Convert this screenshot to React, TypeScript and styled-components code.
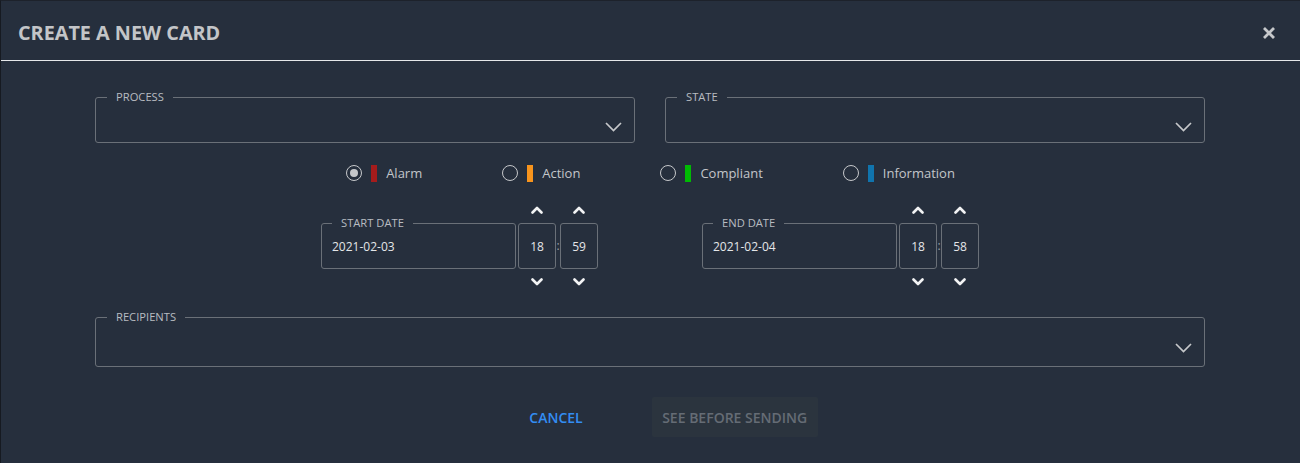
import React from "react";
import styled, { createGlobalStyle } from "styled-components";

const Global = createGlobalStyle`
  html, body { margin: 0; padding: 0; background: #262f3d; }
  body { font-family: "Open Sans", "Noto Sans", sans-serif; }
  * { box-sizing: border-box; }
`;

const Dialog = styled.div`
  width: 1300px;
  height: 463px;
  background: #262f3d;
  border-left: 1px solid #161a21;
  border-top: 1px solid #1d222b;
  display: flex;
  flex-direction: column;
`;

const Header = styled.div`
  height: 60px;
  border-bottom: 1px solid #e6e8ea;
  display: flex;
  align-items: center;
  justify-content: space-between;
  padding: 4px 24px 0 17px;
`;

const Title = styled.h1`
  margin: 0;
  font-size: 19.8px;
  font-weight: 700;
  color: #c3c5c8;
`;

const Close = styled.button`
  background: none;
  border: none;
  padding: 0;
  width: 14px;
  height: 14px;
  display: flex;
  align-items: center;
  justify-content: center;
  cursor: pointer;
`;

const Body = styled.div`
  padding: 30px 95px 0 94px;
  display: flex;
  flex-direction: column;
`;

const Row = styled.div<{ $mt?: number }>`
  display: flex;
  gap: 30px;
  margin-top: ${(p) => p.$mt ?? 0}px;
`;

const Field = styled.fieldset<{ $h: number; $shift: number }>`
  flex: 1;
  margin: 0;
  padding: 0 11px;
  min-width: 0;
  height: ${(p) => p.$h}px;
  border: 1px solid #6a7078;
  border-radius: 3px;
  position: relative;

  & > svg {
    position: absolute;
    right: 12px;
    top: calc(50% + ${(p) => p.$shift}px);
    margin-top: -5px;
  }
`;

const Legend = styled.legend`
  margin-left: 0;
  padding: 0 9px;
  font-size: 11.2px;
  color: #b8bcc1;
  line-height: 12px;
`;

const Radios = styled.div`
  display: flex;
  justify-content: center;
  gap: 80px;
  margin-top: 21px;
  margin-left: 1px;
  height: 18px;
`;

const RadioItem = styled.label`
  display: flex;
  align-items: center;
  font-size: 13px;
  color: #c3c6ca;
`;

const RadioCircle = styled.span<{ $on?: boolean }>`
  width: 16px;
  height: 16px;
  border-radius: 50%;
  border: 1.5px solid #c6c8cb;
  display: flex;
  align-items: center;
  justify-content: center;
  &::after {
    content: "";
    width: 8px;
    height: 8px;
    border-radius: 50%;
    background: ${(p) => (p.$on ? "#c6c8cb" : "transparent")};
  }
`;

const ColorBar = styled.span<{ $c: string }>`
  width: 6px;
  height: 17px;
  background: ${(p) => p.$c};
  margin: 0 9px 0 9px;
`;

const Dates = styled.div`
  display: flex;
  justify-content: center;
  gap: 104px;
  margin-top: 15px;
`;

const DateGroup = styled.div`
  display: flex;
  align-items: flex-start;
`;

const DateField = styled.fieldset`
  margin: 20px 2px 0 0;
  width: 195px;
  height: 52px;
  padding: 0 10px 4px;
  border: 1px solid #6a7078;
  border-radius: 3px;
  display: flex;
  align-items: center;
  font-size: 12px;
  color: #e4e6e8;
`;

const TimeCol = styled.div`
  display: flex;
  flex-direction: column;
  align-items: center;
`;

const Arrow = styled.button`
  background: none;
  border: none;
  padding: 0;
  height: 26px;
  width: 38px;
  display: flex;
  align-items: center;
  justify-content: center;
`;

const TimeBox = styled.div`
  width: 38px;
  height: 46px;
  border: 1px solid #6a7078;
  border-radius: 3px;
  display: flex;
  align-items: center;
  justify-content: center;
  font-size: 12px;
  color: #e4e6e8;
`;

const Colon = styled.span`
  width: 4px;
  text-align: center;
  font-size: 12px;
  color: #9aa0a6;
  margin-top: 40px;
`;

const Actions = styled.div`
  display: flex;
  justify-content: center;
  align-items: center;
  gap: 53px;
  margin-top: 30px;
  padding-left: 31px;
`;

const TextButton = styled.button`
  background: none;
  border: none;
  font-family: inherit;
  font-size: 14px;
  font-weight: 600;
  color: #338df2;
  padding: 0 16px;
  height: 40px;
`;

const DisabledButton = styled.button`
  background: #2b343e;
  border: none;
  border-radius: 2px;
  font-family: inherit;
  font-size: 14px;
  font-weight: 600;
  color: #656c75;
  width: 166px;
  height: 40px;
  padding: 0;
`;

const Chevron = ({ up }: { up?: boolean }) => (
  <svg width="12" height="8" viewBox="0 0 12 8">
    <polyline
      points={up ? "1.5,6.5 6,2 10.5,6.5" : "1.5,1.5 6,6 10.5,1.5"}
      fill="none"
      stroke="#f2f3f4"
      strokeWidth="2.6"
      strokeLinecap="round"
      strokeLinejoin="round"
    />
  </svg>
);

const SelChevron = () => (
  <svg width="17" height="10" viewBox="0 0 17 10">
    <polyline points="1,1 8.5,8.5 16,1" fill="none" stroke="#c6c8cb" strokeWidth="1.7" />
  </svg>
);

const Time = ({ v }: { v: string }) => (
  <TimeCol>
    <Arrow>
      <Chevron up />
    </Arrow>
    <TimeBox>{v}</TimeBox>
    <Arrow>
      <Chevron />
    </Arrow>
  </TimeCol>
);

const DateBlock = ({ label, date, h, m }: { label: string; date: string; h: string; m: string }) => (
  <DateGroup>
    <DateField>
      <Legend>{label}</Legend>
      {date}
    </DateField>
    <Time v={h} />
    <Colon>:</Colon>
    <Time v={m} />
  </DateGroup>
);

const severities = [
  { label: "Alarm", color: "#a51c1c", on: true },
  { label: "Action", color: "#f7941d" },
  { label: "Compliant", color: "#00bb03" },
  { label: "Information", color: "#1074ad" },
];

export default function App() {
  return (
    <>
      <Global />
      <Dialog>
        <Header>
          <Title>CREATE A NEW CARD</Title>
          <Close aria-label="close">
            <svg width="14" height="14" viewBox="0 0 14 14">
              <path d="M2 2 L12 12 M12 2 L2 12" stroke="#c6c8cb" strokeWidth="2.8" />
            </svg>
          </Close>
        </Header>
        <Body>
          <Row>
            <Field $h={52} $shift={4}>
              <Legend>PROCESS</Legend>
              <SelChevron />
            </Field>
            <Field $h={52} $shift={4}>
              <Legend>STATE</Legend>
              <SelChevron />
            </Field>
          </Row>
          <Radios>
            {severities.map((s) => (
              <RadioItem key={s.label}>
                <RadioCircle $on={s.on} />
                <ColorBar $c={s.color} />
                {s.label}
              </RadioItem>
            ))}
          </Radios>
          <Dates>
            <DateBlock label="START DATE" date="2021-02-03" h="18" m="59" />
            <DateBlock label="END DATE" date="2021-02-04" h="18" m="58" />
          </Dates>
          <Row $mt={16}>
            <Field $h={56} $shift={3}>
              <Legend>RECIPIENTS</Legend>
              <SelChevron />
            </Field>
          </Row>
          <Actions>
            <TextButton>CANCEL</TextButton>
            <DisabledButton disabled>SEE BEFORE SENDING</DisabledButton>
          </Actions>
        </Body>
      </Dialog>
    </>
  );
}
